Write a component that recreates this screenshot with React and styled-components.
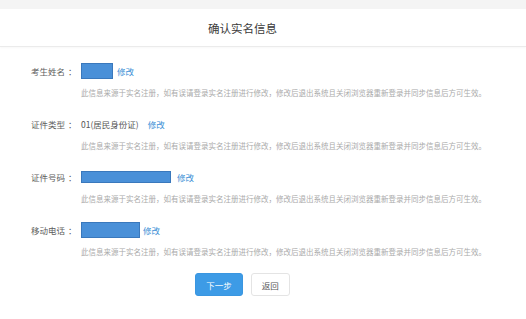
import styled, { createGlobalStyle } from "styled-components";

const GlobalStyle = createGlobalStyle`
  html, body {
    margin: 0;
    padding: 0;
    background: #ffffff;
    font-family: "Noto Sans CJK SC", "Noto Sans", sans-serif;
  }
`;

const TopBand = styled.div`
  height: 9px;
  background: #f4f4f4;
`;

const Header = styled.div`
  height: 37px;
  border-bottom: 1px solid #ebebeb;
  box-shadow: 0 1px 2px rgba(0, 0, 0, 0.03);
`;

const Inner = styled.div`
  width: 485px;
`;

const Title = styled(Inner)`
  height: 100%;
  display: flex;
  align-items: center;
  justify-content: center;
  font-size: 11.5px;
  color: #3a3a3a;
`;

const Form = styled(Inner)`
  padding: 16px 0 0 31px;
  box-sizing: border-box;
  display: flex;
  flex-direction: column;
  gap: 18px;
`;

const Field = styled.div`
  display: grid;
  grid-template-columns: 50px 1fr;
  row-gap: 9px;
`;

const Label = styled.div`
  height: 16px;
  display: flex;
  align-items: center;
  font-size: 8.5px;
  color: #5e5e5e;
  white-space: nowrap;
`;

const Colon = styled.span`
  margin-left: 3px;
`;

const Value = styled.div`
  height: 16px;
  display: flex;
  align-items: center;
  gap: ${(p) => p.$gap || 4}px;
  font-size: 8.5px;
  color: #555;
`;

const Masked = styled.span`
  display: inline-block;
  width: ${(p) => p.$w}px;
  height: ${(p) => p.$h}px;
  background: #4a90d8;
  border: 1px solid #3a78bc;
  box-sizing: border-box;
`;

const Link = styled.a`
  font-size: 8.5px;
  color: #3b8fd6;
  text-decoration: none;
  cursor: pointer;
`;

const Note = styled.div`
  grid-column: 2;
  font-size: 7.5px;
  line-height: 10px;
  color: #aaaaaa;
  white-space: nowrap;
`;

const Actions = styled(Inner)`
  display: flex;
  justify-content: center;
  gap: 8px;
  margin-top: 16px;
`;

const Button = styled.button`
  height: 23px;
  padding: 0 10px;
  border-radius: 3px;
  font-family: inherit;
  font-size: 8.5px;
  cursor: pointer;
  border: 1px solid ${(p) => (p.$primary ? "#3a96e0" : "#e4e4e4")};
  background: ${(p) => (p.$primary ? "#3d9be6" : "#ffffff")};
  color: ${(p) => (p.$primary ? "#ffffff" : "#555")};
`;

const NOTE =
  "此信息来源于实名注册，如有误请登录实名注册进行修改，修改后退出系统且关闭浏览器重新登录并同步信息后方可生效。";

const fields = [
  { label: "考生姓名", mask: [32, 16] },
  { label: "证件类型", text: "01(居民身份证)", gap: 9 },
  { label: "证件号码", mask: [90, 12], gap: 6 },
  { label: "移动电话", mask: [59, 16], gap: 3 },
];

export default function App() {
  return (
    <>
      <GlobalStyle />
      <TopBand />
      <Header>
        <Title>确认实名信息</Title>
      </Header>
      <Form>
        {fields.map((f) => (
          <Field key={f.label}>
            <Label>
              {f.label}
              <Colon>：</Colon>
            </Label>
            <Value $gap={f.gap}>
              {f.mask ? <Masked $w={f.mask[0]} $h={f.mask[1]} /> : <span>{f.text}</span>}
              <Link>修改</Link>
            </Value>
            <Note>{NOTE}</Note>
          </Field>
        ))}
      </Form>
      <Actions>
        <Button $primary>下一步</Button>
        <Button>返回</Button>
      </Actions>
    </>
  );
}
